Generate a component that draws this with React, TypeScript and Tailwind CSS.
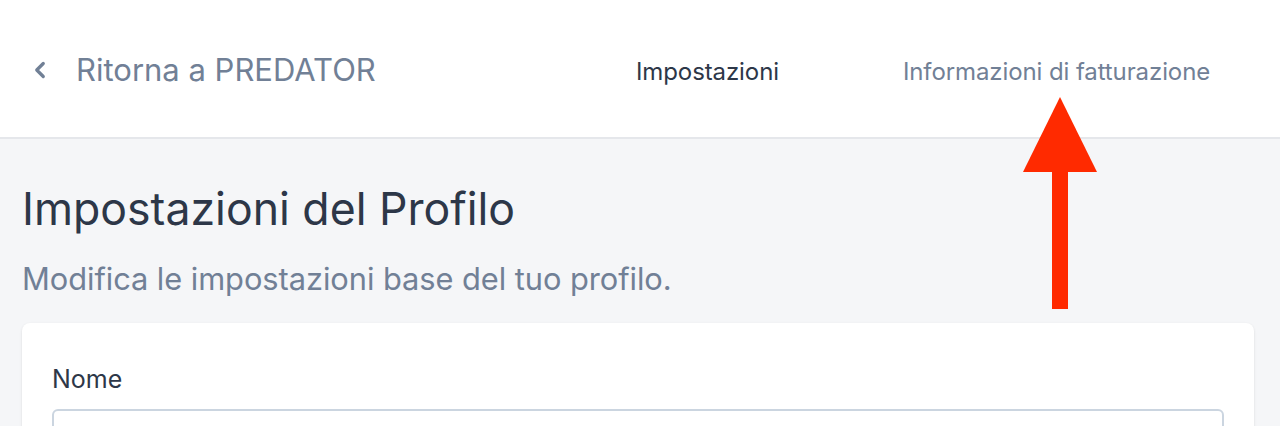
import { ChevronLeft } from 'lucide-react';

export default function App() {
	return (
		<div className="relative min-h-screen bg-[#f5f6f8] font-['Inter',sans-serif]">
			<header className="h-[139px] bg-white border-b-2 border-[#e5e7eb] flex items-center">
				<div className="flex items-center pl-[27px] mt-[3px] w-[600px]">
					<ChevronLeft className="w-[26px] h-[26px] text-[#718096]" strokeWidth={3} />
					<span className="ml-[23px] text-[31px] text-[#718096]">Ritorna a PREDATOR</span>
				</div>
				<nav className="flex items-center ml-[36px] mt-[6px] gap-[124px] text-[24px] tracking-[-0.1px]">
					<span className="text-[#2d3748]">Impostazioni</span>
					<span className="text-[#718096]">Informazioni di fatturazione</span>
				</nav>
			</header>

			<main className="pl-[22px] pr-[26px]">
				<h1 className="mt-[42px] text-[44.6px] leading-[56px] text-[#2d3748]">Impostazioni del Profilo</h1>
				<p className="mt-[22px] text-[30.8px] leading-[40px] tracking-[-0.05px] text-[#718096]">Modifica le impostazioni base del tuo profilo.</p>

				<div className="mt-[24px] bg-white rounded-lg shadow-sm px-[30px] pt-[40px] pb-8">
					<label className="block text-[25px] leading-[32px] text-[#2d3748]">Nome</label>
					<input className="mt-[14px] w-full h-[48px] border-2 border-[#cbd5e0] rounded-md bg-white" />
				</div>
			</main>

			{/* red arrow annotation */}
			<svg className="absolute left-[1020px] top-[95px]" width="80" height="216" viewBox="0 0 80 216">
				<polygon points="40,2 77,77 3,77" fill="#ff2a00" />
				<rect x="32" y="76" width="16" height="138" fill="#ff2a00" />
			</svg>
		</div>
	);
}
